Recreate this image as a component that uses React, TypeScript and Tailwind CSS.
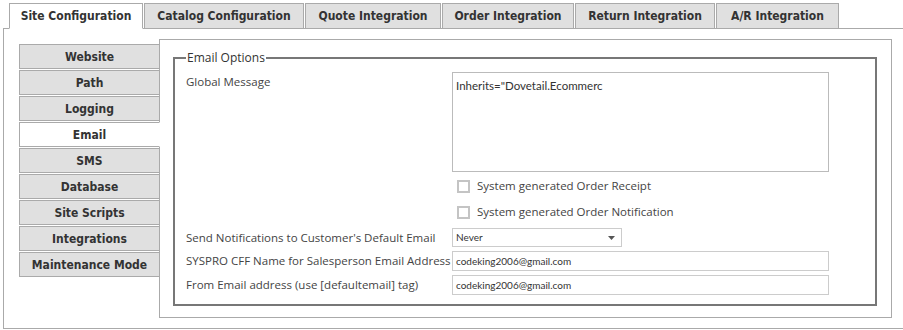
import React from "react";

const tabs = [
  { label: "Site Configuration", w: "w-[134px]", active: true },
  { label: "Catalog Configuration", w: "w-[160px]" },
  { label: "Quote Integration", w: "w-[136px]" },
  { label: "Order Integration", w: "w-[132px]" },
  { label: "Return Integration", w: "w-[140px]" },
  { label: "A/R Integration", w: "w-[123px]" },
];

const nav = [
  "Website",
  "Path",
  "Logging",
  "Email",
  "SMS",
  "Database",
  "Site Scripts",
  "Integrations",
  "Maintenance Mode",
];

const tabFont = "font-['DejaVu_Sans_Condensed','DejaVu_Sans',sans-serif]";
const bodyFont = "font-['Open_Sans','Noto_Sans',sans-serif]";
const inputFont = "font-['Lato','Open_Sans',sans-serif]";

function Checkbox({ label }: { label: string }) {
  return (
    <div className="flex h-[26px] items-center pl-[5px]">
      <span className="box-border h-[13px] w-[13px] border-2 border-[#c4c4c4] bg-white" />
      <span className="ml-[7px] text-[11.5px] text-[#444]">{label}</span>
    </div>
  );
}

export default function App() {
  return (
    <div className="relative h-[330px] w-[903px] overflow-hidden bg-white">
      {/* Tabs */}
      <div className={`relative z-10 flex gap-[1px] pl-[9px] pt-[3px] ${tabFont}`}>
        {tabs.map((t) => (
          <div
            key={t.label}
            className={`${t.w} -mb-px box-border flex h-[26px] items-center justify-center border border-[#aaa] text-[12px] font-bold text-[#333] ${
              t.active ? "border-b-white bg-white" : "bg-[#e0e0e0]"
            }`}
          >
            {t.label}
          </div>
        ))}
      </div>

      {/* Outer panel */}
      <div className="ml-[3px] box-border flex w-[920px] items-start border border-[#aaa] pb-[10px] pl-[15px] pt-[10px]">
        {/* Left nav */}
        <div className={`relative z-10 mt-[5px] flex w-[141px] flex-col gap-[1px] ${tabFont}`}>
          {nav.map((n) => (
            <div
              key={n}
              className={`box-border flex h-[25px] items-center justify-center border border-[#aaa] text-[12px] font-bold text-[#333] ${
                n === "Email" ? "border-r-white bg-white" : "bg-[#e0e0e0]"
              }`}
            >
              {n}
            </div>
          ))}
        </div>

        {/* Content panel */}
        <div className={`-ml-px box-border w-[733px] border border-[#aaa] px-[13px] pb-[11px] pt-[10px] ${bodyFont}`}>
          <fieldset className="box-border w-[704px] border-2 border-[#777] px-[11px] pb-[9px]">
            <legend className="px-[1px] text-[12px] leading-[16px] text-[#333]">Email Options</legend>
            <div className="mt-[6px] flex">
              <div className="w-[266px] pt-[1px] text-[11.5px] text-[#444]">Global Message</div>
              <div className={`box-border h-[100px] w-[377px] border border-[#bbb] px-[3px] pt-[4px] text-[11.5px] text-[#333] ${inputFont}`}>
                Inherits="Dovetail.Ecommerc
              </div>
            </div>
            <div className="ml-[266px] mt-[1px]">
              <Checkbox label="System generated Order Receipt" />
              <Checkbox label="System generated Order Notification" />
            </div>
            <div className="mt-[3px] flex items-center">
              <div className="w-[266px] text-[11.5px] text-[#444]">Send Notifications to Customer's Default Email</div>
              <div className={`relative box-border flex h-[19px] w-[170px] items-center border border-[#ccc] pl-[3px] text-[10px] text-[#333] ${inputFont}`}>
                Never
                <svg className="absolute right-[6px] top-[7px]" width="7" height="4" viewBox="0 0 7 4">
                  <path d="M0 0 H7 L3.5 4 Z" fill="#555" />
                </svg>
              </div>
            </div>
            <div className="mt-[4px] flex items-center">
              <div className="w-[266px] whitespace-nowrap text-[11.5px] text-[#444]">SYSPRO CFF Name for Salesperson Email Address</div>
              <div className={`box-border flex h-[20px] w-[377px] items-center border border-[#ccc] pl-[3px] text-[10px] text-[#333] ${inputFont}`}>
                codeking2006@gmail.com
              </div>
            </div>
            <div className="mt-[4px] flex items-center">
              <div className="w-[266px] text-[11.5px] text-[#444]">From Email address (use [defaultemail] tag)</div>
              <div className={`box-border flex h-[20px] w-[377px] items-center border border-[#ccc] pl-[3px] text-[10px] text-[#333] ${inputFont}`}>
                codeking2006@gmail.com
              </div>
            </div>
          </fieldset>
        </div>
      </div>
    </div>
  );
}
